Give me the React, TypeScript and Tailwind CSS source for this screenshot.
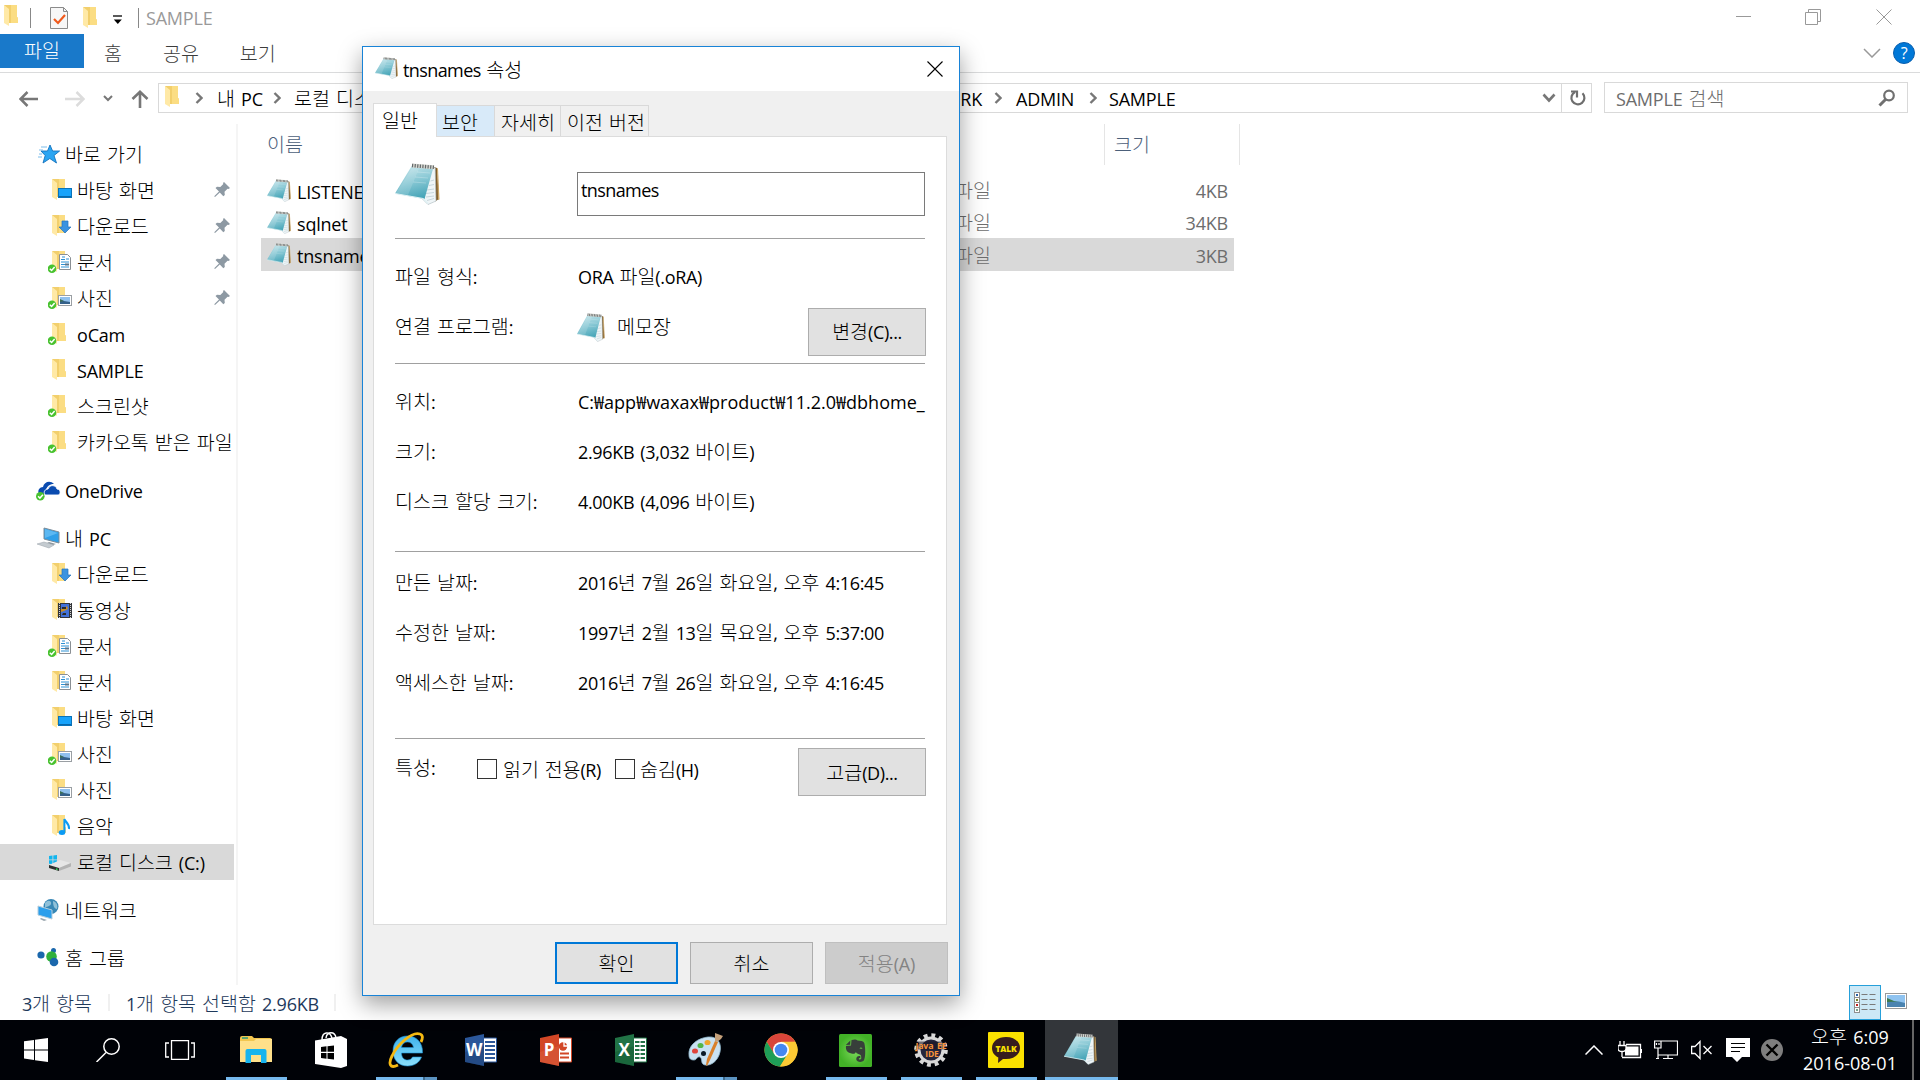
import React from "react";

/* Korean syllables are set slightly larger and lighter than the Latin text around them. */
function T({ children, className = "" }: { children: string; className?: string }) {
  const runs = children.split(/([\uac00-\ud7a3]+)/).filter(Boolean);
  return (
    <span className={"whitespace-pre " + className}>
      {runs.map((r, i) =>
        /[\uac00-\ud7a3]/.test(r) ? (
          <span key={i} className="font-['Noto_Sans_CJK_KR_Light','Noto_Sans_CJK_KR',sans-serif] text-[19.5px] leading-none font-light tracking-normal">{r}</span>
        ) : (
          <React.Fragment key={i}>{r}</React.Fragment>
        )
      )}
    </span>
  );
}

function Notepad({ w, h }: { w: number; h: number }) {
  return (
    <svg width={w} height={h} viewBox="0 0 45 42" preserveAspectRatio="none" className="shrink-0">
      <defs>
        <linearGradient id="np" x1="0.3" y1="0" x2="0.6" y2="1">
          <stop offset="0" stopColor="#c3e4ea" />
          <stop offset="0.45" stopColor="#8ccad6" />
          <stop offset="1" stopColor="#45a4b7" />
        </linearGradient>
      </defs>
      <path d="M39 4l3 1 2 31-4 2.500z" fill="#7d5c2c" />
      <path d="M42 5l1 .5 1.500 31-1.500.5z" fill="#c9a566" />
      <path d="M38 4l2.200 1L41 38l-8 3.500L25.500 34z" fill="#eff5f7" stroke="#a9b8bd" strokeWidth=".6" />
      <path d="M32 27l7-1M31 30.500l8-1M31 34l8-1M34 22.500l5-1M35.500 18l3.500-1M32 37.500l7-2" stroke="#b4c8d0" strokeWidth=".7" />
      <path d="M17 2.500l21.500 1.700L29.500 36 0 30.500z" fill="url(#np)" />
      <path d="M17 5l7 .5L13 32 1 30z" fill="#fff" opacity=".14" />
      <path d="M22 9l13 1M20 14l13 1M18 19l13 1" stroke="#fff" strokeWidth=".8" opacity=".3" />
      <path d="M0 30.500l28 5 5 5" stroke="#dff1f4" strokeWidth="1.100" fill="none" />
      <path d="M17 2.500l22 1.800" stroke="#d8d8d2" strokeWidth="4" />
      <path d="M17 2.500l22 1.800" stroke="#63686a" strokeWidth="3.500" strokeDasharray="1.200 1.400" />
    </svg>
  );
}

type Kind = "desktop" | "down" | "doc" | "pic" | "video" | "music" | "plain";

function Folder({ kind = "plain", sync = false }: { kind?: Kind; sync?: boolean }) {
  return (
    <svg width="26" height="24" viewBox="0 0 26 24" className="shrink-0">
      <path d="M4 1h13v12l1 1v5H7z" fill="#f2cf6c" />
      <path d="M11 1h6v12l1 1v5h-7z" fill="#fbdd83" />
      <path d="M4 1l5 4v17l-5-3z" fill="#ffe9a6" />
      {kind === "desktop" && (
        <g>
          <rect x="10.5" y="10.5" width="13" height="9" fill="#18a3fb" stroke="#0a73b9" />
          <path d="M11 18.5h12" stroke="#0868ac" />
        </g>
      )}
      {kind === "down" && <path d="M14 7h6v6h3l-6 6-6-6h3z" fill="#3b93e0" stroke="#2273bd" strokeWidth=".7" />}
      {kind === "doc" && (
        <g>
          <path d="M11.5 4.5h8l3 3v12h-11z" fill="#fff" stroke="#8a8f94" />
          <path d="M13 9.500h4M13 12h8M13 14.500h4M13 17h8" stroke="#2d91d3" />
          <path d="M14 7h3M18 9h3" stroke="#2d91d3" />
          <rect x="17" y="13.500" width="4" height="2" fill="#59758c" />
        </g>
      )}
      {kind === "pic" && (
        <g>
          <rect x="10.500" y="9.500" width="13" height="10" fill="#fff" stroke="#9a9fa3" />
          <rect x="12" y="11" width="10" height="7" fill="#8fc0ee" />
          <path d="M12 14l4 1 6 1v2H12z" fill="#35618a" />
          <path d="M12 13l4 2-4 1z" fill="#3b6f55" />
        </g>
      )}
      {kind === "video" && (
        <g>
          <rect x="10" y="5" width="14" height="15" fill="#34363a" />
          <rect x="13" y="6" width="8" height="13" fill="#4271d8" />
          <path d="M11.500 5v15M22.500 5v15" stroke="#d5d5d5" strokeDasharray="1 1" />
          <path d="M13 11l3-1 3-2 1 3-4 2-3 1z" fill="#c78d26" />
          <path d="M14 9h4v2h-4zM14 17h4v-2h-3z" fill="#2b2b2b" />
        </g>
      )}
      {kind === "music" && (
        <g>
          <ellipse cx="14" cy="18.500" rx="3.300" ry="2.500" fill="#0a9bf5" />
          <path d="M16.400 18V5c1 3 5.400 5 4.600 10" fill="none" stroke="#0a9bf5" strokeWidth="2" />
        </g>
      )}
      {sync && <SyncBadge x={4} y={18.7} />}
    </svg>
  );
}

function SyncBadge({ x, y }: { x: number; y: number }) {
  return (
    <g>
      <circle cx={x} cy={y} r="4.300" fill="#48c22f" />
      <path d={`M${x - 2.2} ${y}l1.800 1.800 3-3.400`} fill="none" stroke="#fff" strokeWidth="1.500" />
    </g>
  );
}

function Pin() {
  return (
    <svg width="16" height="16" viewBox="0 0 16 16">
      <path d="M10 0l6 6-1.500 1-1-.3-3 3 .3 3.300-1.500 1.300-3.500-3.700L1 15l-.8-.8L5 9.500 1.500 6 3 4.700l3.300.3 3-3L9 1z" fill="#8d99a3" />
    </svg>
  );
}

function NavRow({ icon, label, root, pin, selected }: { icon: React.ReactNode; label: string; root?: boolean; pin?: boolean; selected?: boolean }) {
  return (
    <div className={"flex h-9 w-[234px] shrink-0 items-center " + (selected ? "bg-[#d9d9d9]" : "")}>
      <div className={root ? "ml-[36px] flex w-[29px]" : "ml-[48px] flex w-[29px]"}>{icon}</div>
      <T className="pt-[2px] leading-[34px]">{label}</T>
      {pin && <div className="mr-[4px] ml-auto"><Pin /></div>}
    </div>
  );
}

const Star = (
  <svg width="24" height="22" viewBox="0 0 24 22">
    <path d="M13 2l2.600 6h7l-5.600 4.500 2.500 7.500-6.700-4.500L6 20l2.200-7.500L4 8h6.500z" fill="#2aa5f2" stroke="#1473bd" strokeWidth=".9" />
    <path d="M4 4h6M2 7h4M5 11H2M5 14H1" stroke="#7cbdea" />
  </svg>
);
const OneDrive = (
  <svg width="25" height="22" viewBox="0 0 25 22">
    <path d="M3 15C1 11 4 8 7 8c1-5 7-7 11-3 0 0-8-1-9 10z" fill="#0a4bb0" />
    <path d="M9 16c-2-3 0-6 3-6 2-5 8-4 9 0 4 0 4 6 1 6z" fill="#0a4bb0" stroke="#fff" strokeWidth=".9" />
    <SyncBadge x={4.3} y={17.3} />
  </svg>
);
const Computer = (
  <svg width="25" height="22" viewBox="0 0 25 22">
    <path d="M8 1l15 4v11L8 12z" fill="#2f9fe8" stroke="#7d8c98" />
    <path d="M9 2l13 4-13 5z" fill="#7ccaf8" opacity=".6" />
    <path d="M13 15l7 2-3 1-6-2z" fill="#8c979e" />
    <path d="M1 17l7-2 10 3-5 3z" fill="#c4cbd0" stroke="#98a1a8" strokeWidth=".5" />
  </svg>
);
const Disk = (
  <svg width="26" height="22" viewBox="0 0 26 22">
    <path d="M1 4l3.500-.5v4H1zM5.300 3.400L9 3v4.500H5.300zM1 8.200h3.500v4L1 11.800zM5.300 8.200H9v4.500l-3.700-.4z" fill="#12b5ee" />
    <path d="M1 13l11-5 11 3-12 5z" fill="#e6e6e6" />
    <path d="M11 16l12-5v3.500L11 19z" fill="#b3b3b3" />
    <path d="M1 13l10 3v3L1 16z" fill="#2d302e" />
    <path d="M8 17l1.500.5" stroke="#33e05b" strokeWidth="1.500" />
  </svg>
);
const Network = (
  <svg width="25" height="24" viewBox="0 0 25 24">
    <circle cx="15" cy="8.500" r="7.500" fill="#3787b5" />
    <path d="M9 5c3-4 7-2 6 1s-5 2-6 4zM17 3c4 1 5 5 4 8-3 0-4-4-4-8z" fill="#8fc0d8" />
    <path d="M2 8l14 4v9L2 17z" fill="#2c9fec" stroke="#b7cfdd" />
    <path d="M5 20l6 2-3 1-4-2z" fill="#9aa6ae" />
  </svg>
);
const HomeGroup = (
  <svg width="25" height="22" viewBox="0 0 25 22">
    <circle cx="5" cy="8" r="3.600" fill="#1a67ac" />
    <circle cx="17.500" cy="3.500" r="2.500" fill="#1a67ac" />
    <circle cx="15.500" cy="9.500" r="5.300" fill="#31b03c" />
    <circle cx="18" cy="15" r="4.300" fill="#1a67ac" />
  </svg>
);

function Sidebar() {
  return (
    <div className="flex h-[861px] w-[238px] shrink-0 flex-col border-r-2 border-[#f5f5f5] pt-[12px]">
      <NavRow root icon={<div className="ml-[1px]">{Star}</div>} label="바로 가기" />
      <NavRow pin icon={<Folder kind="desktop" />} label="바탕 화면" />
      <NavRow pin icon={<Folder kind="down" />} label="다운로드" />
      <NavRow pin icon={<Folder kind="doc" sync />} label="문서" />
      <NavRow pin icon={<Folder kind="pic" sync />} label="사진" />
      <NavRow icon={<Folder sync />} label="oCam" />
      <NavRow icon={<Folder />} label="SAMPLE" />
      <NavRow icon={<Folder sync />} label="스크린샷" />
      <NavRow icon={<Folder sync />} label="카카오톡 받은 파일" />
      <div className="h-3" />
      <NavRow root icon={OneDrive} label="OneDrive" />
      <div className="h-3" />
      <NavRow root icon={Computer} label="내 PC" />
      <NavRow icon={<Folder kind="down" />} label="다운로드" />
      <NavRow icon={<Folder kind="video" />} label="동영상" />
      <NavRow icon={<Folder kind="doc" sync />} label="문서" />
      <NavRow icon={<Folder kind="doc" />} label="문서" />
      <NavRow icon={<Folder kind="desktop" />} label="바탕 화면" />
      <NavRow icon={<Folder kind="pic" sync />} label="사진" />
      <NavRow icon={<Folder kind="pic" />} label="사진" />
      <NavRow icon={<Folder kind="music" />} label="음악" />
      <NavRow selected icon={<div className="mt-[2px]">{Disk}</div>} label="로컬 디스크 (C:)" />
      <div className="h-3" />
      <NavRow root icon={Network} label="네트워크" />
      <div className="h-3" />
      <NavRow root icon={HomeGroup} label="홈 그룹" />
    </div>
  );
}

function TitleBar() {
  return (
    <div className="flex h-[34px] items-center">
      <div className="flex w-[30px]"><div className="-mt-[2px]"><Folder /></div></div>
      <div className="mt-[2px] h-[20px] w-px bg-[#888]" />
      <svg width="18" height="22" viewBox="0 0 18 22" className="mt-[2px] ml-[19px]">
        <path d="M.5.500h13l4 4v17H.5z" fill="#f7f7f7" stroke="#8b8b8b" />
        <path d="M13.500.500v4h4" fill="none" stroke="#8b8b8b" />
        <path d="M4 12l4 4 7-8" fill="none" stroke="#f05a1c" strokeWidth="2.200" />
      </svg>
      <div className="mt-[2px] ml-[11px] flex w-[32px]"><Folder /></div>
      <svg width="10" height="10" viewBox="0 0 10 10" className="mt-[6px] ml-[2px]">
        <path d="M0 1h9" stroke="#000" strokeWidth="1.300" />
        <path d="M.8 4.500h8L4.800 9z" fill="#000" />
      </svg>
      <div className="mt-[2px] ml-[15px] h-[20px] w-px bg-[#888]" />
      <T className="mt-[3px] ml-[7px] text-[#999]">SAMPLE</T>
      <div className="mr-[28px] ml-auto flex items-center gap-[54px]">
        <svg width="16" height="16" viewBox="0 0 16 16"><path d="M0 7.500h15" stroke="#999" /></svg>
        <svg width="16" height="16" viewBox="0 0 16 16" fill="none" stroke="#999" className="-ml-px mr-px">
          <path d="M.5 3.500h12v12H.5zM3.500 3.500v-3h12v12h-3" />
        </svg>
        <svg width="16" height="16" viewBox="0 0 16 16"><path d="M.5.500l15 15M15.500.500l-15 15" stroke="#999" /></svg>
      </div>
    </div>
  );
}

function RibbonTabs() {
  return (
    <div className="flex h-[39px] items-start border-b border-[#dadbdc] text-[#3c3c3c]">
      <div className="flex h-[34px] w-[84px] items-center justify-center bg-[#1979ca] pt-px text-white"><T>파일</T></div>
      <T className="ml-[20px] leading-[41px]">홈</T>
      <T className="ml-[41px] leading-[41px]">공유</T>
      <T className="ml-[41px] leading-[41px]">보기</T>
      <div className="mt-[8px] mr-[5px] ml-auto flex items-center gap-[12px]">
        <svg width="18" height="10" viewBox="0 0 18 10"><path d="M1 1l8 8 8-8" fill="none" stroke="#999" strokeWidth="1.500" /></svg>
        <div className="flex size-[22px] items-center justify-center rounded-full border border-[#0a5fae] bg-[#0078d7] text-[16px] leading-none text-white">?</div>
      </div>
    </div>
  );
}

function Crumb() {
  return (
    <svg width="8" height="12" viewBox="0 0 8 12" className="shrink-0">
      <path d="M1.500 1l5 5-5 5" fill="none" stroke="#777" strokeWidth="2.400" />
    </svg>
  );
}

function AddressRow() {
  return (
    <div className="flex h-[51px] items-start pt-[9px]">
      <div className="flex h-[32px] w-[158px] shrink-0 items-center pt-px">
        <svg width="20" height="16" viewBox="0 0 20 16" className="ml-[19px]" fill="none" stroke="#777" strokeWidth="2.500">
          <path d="M19 8H2M8.500 1L1.500 8l7 7" />
        </svg>
        <svg width="20" height="16" viewBox="0 0 20 16" className="ml-[26px]" fill="none" stroke="#dcdcdc" strokeWidth="2.500">
          <path d="M0 8h18M11.500 1l7 7-7 7" />
        </svg>
        <svg width="10" height="7" viewBox="0 0 10 7" className="ml-[18px]" fill="none" stroke="#777" strokeWidth="2"><path d="M1 1l4 4 4-4" /></svg>
        <svg width="18" height="18" viewBox="0 0 18 18" className="ml-[18px]" fill="none" stroke="#777" strokeWidth="2.600">
          <path d="M9 18V2M1.500 9L9 1.800 16.500 9" />
        </svg>
      </div>
      <div className="mt-[1px] flex h-[30px] w-[1434px] shrink-0 items-center border border-[#d9d9d9]">
        <div className="flex w-[36px]"><div className="ml-[2px] -mt-[2px]"><Folder /></div></div>
        <Crumb />
        <T className="mt-[3px] ml-[14px] w-[56px] shrink-0">내 PC</T>
        <Crumb />
        <T className="mt-[3px] ml-[13px] shrink-0">로컬 디스</T>
        <T className="mt-[3px] ml-auto">NETWORK</T>
        <div className="ml-[12px]"><Crumb /></div>
        <T className="mt-[3px] ml-[14px] w-[73px]">ADMIN</T>
        <Crumb />
        <T className="mt-[3px] ml-[12px] w-[433px]">SAMPLE</T>
        <svg width="14" height="10" viewBox="0 0 14 10" fill="none" stroke="#777" strokeWidth="2.600"><path d="M1.500 1.500L7 7.500l5.500-6" /></svg>
        <div className="ml-[5px] flex h-full w-[30px] items-center justify-center border-l border-[#d9d9d9]">
          <svg width="18" height="18" viewBox="0 0 18 18" fill="none" stroke="#6e6e6e" strokeWidth="2.200" className="ml-[2px]">
            <path d="M13.500 4.200A6.500 6.500 0 1 1 6 3" /><path d="M2 2.500h6v6" />
          </svg>
        </div>
      </div>
      <div className="ml-[12px] flex h-[31px] w-[304px] items-center border border-[#d9d9d9] pr-[11px] pl-[11px] text-[#6d6d6d]">
        <T className="mt-[3px]">SAMPLE 검색</T>
        <svg width="18" height="18" viewBox="0 0 18 18" className="ml-auto" fill="none" stroke="#707070">
          <circle cx="11" cy="6.500" r="4.800" strokeWidth="2.200" /><path d="M8 10l-6.500 6.500" strokeWidth="3" />
        </svg>
      </div>
    </div>
  );
}

function FileRow({ name, size, selected }: { name: string; size: string; selected?: boolean }) {
  return (
    <div className={"flex w-[973px] items-center pr-[6px] pl-[6px] " + (selected ? "h-[33px] bg-[#d9d9d9]" : "h-[32px]")}>
      <div><Notepad w={24} h={23} /></div>
      <T className="mt-[3px] ml-[6px] w-[616px] leading-8">{name}</T>
      <T className="mt-[3px] text-[#6d6d6d]">ORA 파일</T>
      <T className="mt-[3px] ml-auto text-[#6d6d6d]">{size}</T>
    </div>
  );
}

function Files() {
  return (
    <div className="flex flex-col pl-[23px]">
      <div className="flex h-[41px] items-center text-[#4c607a]">
        <T className="mt-[2px] ml-[6px] w-[837px]">이름</T>
        <div className="flex h-full w-[136px] items-center border-x border-[#e5e5e5] pt-[2px] pl-[9px]"><T>크기</T></div>
      </div>
      <div className="mt-[9px] flex flex-col">
        <FileRow name="LISTENER" size="4KB" />
        <FileRow name="sqlnet" size="34KB" />
        <FileRow name="tnsnames" size="3KB" selected />
      </div>
    </div>
  );
}

function StatusBar() {
  return (
    <div className="flex h-[35px] items-center text-[#1e395b]">
      <T className="mt-[3px] ml-[22px] w-[86px]">3개 항목</T>
      <div className="h-[17px] w-[2px] bg-[#f0f0f0]" />
      <T className="mt-[3px] ml-[16px] w-[208px]">1개 항목 선택함 2.96KB</T>
      <div className="h-[17px] w-[2px] bg-[#f0f0f0]" />
      <div className="mr-[13px] ml-auto flex items-center gap-[4px]">
        <div className="flex h-[35px] w-[32px] items-center justify-center border border-[#26a0da] bg-[#cce8f6]">
          <svg width="22" height="22" viewBox="0 0 22 22">
            {[0, 1, 2, 3].map((i) => (
              <g key={i}>
                <rect x=".5" y={0.5 + i * 5} width="5" height="5" fill="#fff" stroke="#8f8f8f" />
                <path d={`M7.500 ${2.5 + i * 5}h6M15.500 ${2.5 + i * 5}h6`} stroke="#7a7a7a" />
              </g>
            ))}
            <path d="M2 2h2v2H2z" fill="#2a62a5" /><path d="M2 7h2v2H2z" fill="#768022" />
            <path d="M2 12h2v2H2z" fill="#c02020" /><path d="M2 17h2v2H2z" fill="#75a58c" />
          </svg>
        </div>
        <svg width="22" height="16" viewBox="0 0 22 16" className="-mt-[3px]">
          <rect x=".5" y=".5" width="21" height="15" fill="#fff" stroke="#999" />
          <rect x="2" y="2" width="18" height="12" fill="#8fc3f0" />
          <path d="M2 5l7 3 5 1H2z" fill="#3d7a4d" /><path d="M2 9l12-.5 6 1.500v4H2z" fill="#4a83b0" />
        </svg>
      </div>
    </div>
  );
}

function Field({ label, value, wide }: { label: string; value: string; wide?: boolean }) {
  return (
    <div className="flex h-[50px] items-center">
      <T className="w-[183px] shrink-0">{label}</T>
      <T className={wide ? "tracking-[0.01px]" : "tracking-[-0.33px]"}>{value}</T>
    </div>
  );
}

const Rule = () => <div className="h-px shrink-0 bg-[#a0a0a0]" />;

const btn = "flex items-center justify-center border ";

function Properties() {
  return (
    <div className="absolute top-[46px] left-[362px] flex h-[950px] w-[598px] flex-col border border-[#1883d7] bg-[#f0f0f0] shadow-[0_8px_22px_rgba(0,0,0,0.38)]">
      <div className="flex h-[44px] shrink-0 items-center bg-white pl-[12px]">
        <div className="-mt-[3px]"><Notepad w={23} h={22} /></div>
        <T className="mt-[3px] ml-[5px] tracking-[-0.6px]">tnsnames 속성</T>
        <svg width="16" height="16" viewBox="0 0 16 16" className="mr-[16px] -mt-[1px] ml-auto"><path d="M.5.500l15 15M15.500.500l-15 15" stroke="#000" strokeWidth="1.100" /></svg>
      </div>
      <div className="relative z-10 mt-[12px] ml-[10px] flex items-end">
        <div className="-mb-px h-[34px] w-[64px] border border-b-0 border-[#dcdcdc] bg-white pl-[8px] leading-[34px]"><T>일반</T></div>
        <div className="h-[31px] w-[58px] border-t border-r border-[#d9d9d9] bg-[#d8eaf9] pl-[5px] leading-[34px]"><T>보안</T></div>
        <div className="h-[31px] w-[66px] border-t border-r border-[#d9d9d9] pl-[6px] leading-[34px]"><T>자세히</T></div>
        <div className="h-[31px] w-[88px] border-t border-r border-[#d9d9d9] pl-[6px] leading-[34px]"><T>이전 버전</T></div>
      </div>
      <div className="ml-[10px] flex h-[789px] w-[574px] shrink-0 flex-col border border-[#dcdcdc] bg-white pr-[21px] pl-[21px]">
        <div className="flex h-[101px] shrink-0 items-start">
          <div className="mt-[26px] w-[182px]"><Notepad w={45} h={42} /></div>
          <div className="mt-[35px] h-[44px] flex-1 border border-[#7a7a7a] pl-[3px] leading-[35px]"><T className="tracking-[-0.6px]">tnsnames</T></div>
        </div>
        <Rule />
        <div className="flex h-[124px] shrink-0 flex-col pt-[13px]">
          <Field label="파일 형식:" value="ORA 파일(.oRA)" />
          <div className="flex h-[50px] items-center">
            <T className="w-[182px] shrink-0">연결 프로그램:</T>
            <Notepad w={28} h={29} />
            <T className="ml-[12px]">메모장</T>
            <div className={btn + "mt-[9px] -mr-px ml-auto h-[48px] w-[118px] border-[#adadad] bg-[#e1e1e1] pt-[2px] tracking-[-0.4px]"}><T>변경(C)...</T></div>
          </div>
        </div>
        <Rule />
        <div className="flex h-[187px] shrink-0 flex-col pt-[13px]">
          <Field wide label="위치:" value="C:₩app₩waxax₩product₩11.2.0₩dbhome_" />
          <Field label="크기:" value="2.96KB (3,032 바이트)" />
          <Field label="디스크 할당 크기:" value="4.00KB (4,096 바이트)" />
        </div>
        <Rule />
        <div className="flex h-[186px] shrink-0 flex-col pt-[6px]">
          <Field label="만든 날짜:" value="2016년 7월 26일 화요일, 오후 4:16:45" />
          <Field label="수정한 날짜:" value="1997년 2월 13일 목요일, 오후 5:37:00" />
          <Field label="액세스한 날짜:" value="2016년 7월 26일 화요일, 오후 4:16:45" />
        </div>
        <Rule />
        <div className="flex shrink-0 items-start pt-[9px]">
          <T className="w-[82px] leading-[40px]">특성:</T>
          <div className="mt-[11px] size-[20px] border border-[#333] bg-white" />
          <T className="ml-[6px] w-[112px] leading-[45px] tracking-[-0.5px]">읽기 전용(R)</T>
          <div className="mt-[11px] size-[20px] border border-[#333] bg-white" />
          <T className="ml-[5px] leading-[45px] tracking-[-0.5px]">숨김(H)</T>
          <div className={btn + "-mr-px ml-auto h-[48px] w-[128px] border-[#adadad] bg-[#e1e1e1] pt-[2px] tracking-[-0.4px]"}><T>고급(D)...</T></div>
        </div>
      </div>
      <div className="mt-[17px] mr-[11px] flex justify-end gap-[12px]">
        <div className={btn + "h-[42px] w-[123px] border-2 border-[#0078d7] bg-[#e1e1e1] pt-[2px]"}><T>확인</T></div>
        <div className={btn + "h-[42px] w-[123px] border-[#adadad] bg-[#e1e1e1] pt-[2px]"}><T>취소</T></div>
        <div className={btn + "h-[42px] w-[123px] border-[#bfbfbf] bg-[#cccccc] pt-[2px] text-[#838383]"}><T>적용(A)</T></div>
      </div>
    </div>
  );
}

function Office({ color, dark, letter, children }: { color: string; dark: string; letter: string; children: React.ReactNode }) {
  return (
    <svg width="32" height="32" viewBox="0 0 32 32">
      <path d="M18 4h13.500v24H18z" fill="#fff" stroke={color} />
      {children}
      <path d="M0 4l19-4v32L0 28z" fill={color} />
      <path d="M0 18l19-6v20L0 28z" fill={dark} opacity=".35" />
      <text x="9" y="22" textAnchor="middle" fontSize="17" fontWeight="700" fill="#fff" fontFamily="Open Sans, sans-serif">{letter}</text>
    </svg>
  );
}

const StartIcon = (
  <svg width="24" height="24" viewBox="0 0 24 24" fill="#fff"><path d="M0 3.300L10 2v9.400H0zM11 1.800L24 0v11.400H11zM0 12.500h10v9.400l-10-1.300zM11 12.500h13V24l-13-1.800z" /></svg>
);
const SearchIcon = (
  <svg width="24" height="24" viewBox="0 0 24 24" fill="none" stroke="#fff" strokeWidth="1.500"><circle cx="15.500" cy="8.500" r="7.700" /><path d="M10 14.500L.5 24" /></svg>
);
const TaskView = (
  <svg width="30" height="20" viewBox="0 0 30 20" fill="none" stroke="#fff" strokeWidth="1.300"><path d="M6.500.700h17v18.600h-17zM4 3H.7v14H4M26 3h3.300v14H26" /></svg>
);
const Explorer = (
  <svg width="32" height="28" viewBox="0 0 32 28">
    <path d="M0 2q0-2 2-2h10l2 2h16q2 0 2 2v22H0z" fill="#f3c64f" />
    <path d="M0 5h14l2-2h16v23H0z" fill="#ffe08a" />
    <path d="M2 2h6" stroke="#2a9a7b" strokeWidth="1.500" />
    <path d="M5.500 27V15q0-2 2-2h17q2 0 2 2v12H21v-8H11v8z" fill="#18b4ee" />
  </svg>
);
const Store = (
  <svg width="32" height="36" viewBox="0 0 32 36">
    <path d="M7 8C7-1 15-1 17 6M11 6c1-7 9-7 10 0" fill="none" stroke="#fff" strokeWidth="1.500" />
    <path d="M0 8.500L26 4l6 3v27l-6 2-26-4z" fill="#fff" />
    <path d="M6 15l5.500-.7v5.500H6zM12.500 14.200L19 13.500v6.300h-6.500zM6 21h5.500v5.700L6 26zM12.500 21H19v6.500l-6.500-.8z" fill="#000" />
  </svg>
);
const IE = (
  <svg width="36" height="36" viewBox="0 0 36 36">
    <defs>
      <linearGradient id="ie" x1="0" y1="0" x2="0" y2="1"><stop offset="0" stopColor="#3fb3ec" /><stop offset="1" stopColor="#8be0fb" /></linearGradient>
    </defs>
    <path d="M34.500 21C35 10 28 4 19.500 4 11 4 5 10 5 19s6 15 14.500 15c7 0 12-3.500 14-9h-9c-1 2-2.500 3-5 3-3.500 0-6-2.500-6-7zM13.500 15.500c.5-3.500 3-5.500 6-5.500s5.500 2 6 5.500z" fill="url(#ie)" stroke="#1d94d8" strokeWidth=".6" />
    <path d="M10 33C2 37 0 32 4 24 9 13 24-1 32 2c3 1 3 4 1 8" fill="none" stroke="#f5b912" strokeWidth="2.800" />
  </svg>
);
const Paint = (
  <svg width="36" height="36" viewBox="0 0 36 36">
    <path d="M1 23C0 13 10 6 20 5c10-1 14 7 12 15-2 9-9 14-15 13-5-1-2-6-5-8-3-1-3 3-6 3s-5-1-5-5z" fill="#c9e1f1" stroke="#8fb6cc" strokeWidth=".8" />
    <ellipse cx="12.500" cy="13.500" rx="3" ry="2.600" fill="#53b648" /><ellipse cx="7" cy="19" rx="3" ry="2.600" fill="#e0453c" />
    <ellipse cx="19.500" cy="10.500" rx="3" ry="2.600" fill="#efa52b" /><circle cx="15.500" cy="21.500" r="2.500" fill="#0b1a26" />
    <path d="M27 9l3 1-8 18-3 6-1-1 1-6z" fill="#d9802b" />
    <path d="M27 1l8 3-2 3-4 3-2-1z" fill="#c4a07a" />
  </svg>
);
const Chrome = (
  <svg width="34" height="34" viewBox="0 0 34 34">
    <circle cx="17" cy="17" r="16.500" fill="#fcc934" />
    <path d="M2.700 8.700A16.500 16.500 0 0 1 31.300 8.700L17 9.500l-7 11.500z" fill="#d9453a" />
    <path d="M2.700 8.700A16.500 16.500 0 0 0 16 33.500l8-13H10z" fill="#1e9e57" />
    <path d="M31.300 8.700H17l7 12-8 12.800A16.500 16.500 0 0 0 31.300 8.700z" fill="#fcc934" />
    <circle cx="17" cy="17" r="8" fill="#fff" /><circle cx="17" cy="17" r="6.300" fill="#4688f1" />
  </svg>
);
const Evernote = (
  <svg width="33" height="33" viewBox="0 0 33 33">
    <defs>
      <radialGradient id="ev"><stop offset="0" stopColor="#7ddb5c" /><stop offset="1" stopColor="#42b227" /></radialGradient>
    </defs>
    <rect width="33" height="33" rx="1.500" fill="url(#ev)" />
    <path d="M7 12l5-.5.5-5.500c3-1 5-.5 6 .5 3 .3 6 .5 6.800 2.500 1.500 6 1.200 15-.5 17.500-1.500 2-7 2-7.500-1-.3-3 2-4 4-3.500v2c-1 0-1.500.3-1.500 1 .5 1 2.500.5 2.500-1 0-3-1-3.500-3-4-1.500-.5-2-1-2.300-2-1 2-2.500 2-4.500 1.500C8 18.500 6.500 16 7 12z" fill="#373f3a" />
    <path d="M6.800 11l4.500-4.500v4.200z" fill="#373f3a" />
    <path d="M20.500 14.500q1.500-2 3 .3z" fill="#6fd04f" />
  </svg>
);
const JavaEE = (
  <svg width="34" height="34" viewBox="0 0 34 34">
    <circle cx="17" cy="17" r="14.800" fill="none" stroke="#d8d8d8" strokeWidth="4" strokeDasharray="3.870 3.870" />
    <circle cx="17" cy="17" r="12" fill="#25253c" stroke="#d8d8d8" strokeWidth="3" />
    <path d="M2 8.500h30v8H2z" fill="#1a1420" opacity=".55" />
    <g fill="#f7923a" fontFamily="Open Sans, sans-serif" fontWeight="700" textAnchor="middle">
      <text x="17" y="15.500" fontSize="8.500" textLength="31" lengthAdjust="spacingAndGlyphs">Java EE</text>
      <text x="18" y="23.500" fontSize="8.500">IDE</text>
    </g>
  </svg>
);
const Kakao = (
  <svg width="36" height="36" viewBox="0 0 36 36">
    <rect width="36" height="36" rx="1" fill="#fae100" />
    <path d="M18 5c8 0 14 4.500 14 11S26 27 18 27l-3 0-5 4 .3-5.500C6.500 23.500 4 20.500 4 16 4 9.500 10 5 18 5z" fill="#371d1e" />
    <text x="18" y="20" fontSize="9.500" fontWeight="800" fill="#fae100" textAnchor="middle" fontFamily="Open Sans, sans-serif" textLength="21" lengthAdjust="spacingAndGlyphs">TALK</text>
  </svg>
);

function Task({ icon, open, multi }: { icon: React.ReactNode; open?: boolean; multi?: boolean }) {
  return (
    <div className="flex h-[60px] w-[75px] flex-col items-center">
      <div className="flex h-[57px] items-center justify-center pt-[3px] pr-[2px]">{icon}</div>
      {open && (
        <div className="flex h-[3px] w-[61px] bg-[#76b9ed]">
          {multi && <div className="ml-auto h-full w-[14px] border-l-2 border-[#3f6b8c] bg-[#5b93c1]" />}
        </div>
      )}
    </div>
  );
}

function Taskbar() {
  return (
    <div className="flex h-[60px] bg-[#000207] text-white">
      <div className="flex w-[72px] items-center justify-center">{StartIcon}</div>
      <div className="flex w-[72px] items-center justify-center">{SearchIcon}</div>
      <div className="mr-[3px] flex w-[72px] items-center justify-center">{TaskView}</div>
      <Task icon={Explorer} open />
      <Task icon={Store} />
      <Task icon={IE} open multi />
      <Task icon={<Office color="#2b579a" dark="#17375e" letter="W"><path d="M20 8h10M20 12h10M20 16h10M20 20h10M20 24h10" stroke="#2b579a" strokeWidth="1.800" /></Office>} />
      <Task icon={<Office color="#d24726" dark="#dd6a4b" letter="P"><path d="M20 19.500h9M20 23.500h9" stroke="#d24726" strokeWidth="1.800" /><circle cx="23" cy="12.500" r="4.200" fill="#d24726" /><path d="M24 7v5h5" stroke="#fff" fill="none" strokeWidth="1.300" /></Office>} />
      <Task icon={<Office color="#217346" dark="#0f4f2c" letter="X"><path d="M20 8h10M20 12h10M20 16h10M20 20h10M20 24h10" stroke="#217346" strokeWidth="2" strokeDasharray="4.500 1" /></Office>} />
      <Task icon={Paint} open multi />
      <Task icon={Chrome} />
      <Task icon={Evernote} open />
      <Task icon={JavaEE} open />
      <Task icon={Kakao} open />
      <div className="ml-px flex w-[73px] flex-col items-center bg-[#33363a]">
        <div className="flex h-[57px] items-center pt-px pr-[2px]"><Notepad w={33} h={32} /></div>
        <div className="h-[3px] w-full bg-[#76b9ed]" />
      </div>
      <div className="ml-auto flex items-center">
        <svg width="18" height="10" viewBox="0 0 18 10" fill="none" stroke="#fff" strokeWidth="1.500"><path d="M.5 9.500L9 1l8.500 8.500" /></svg>
        <svg width="24" height="18" viewBox="0 0 24 18" className="ml-[15px]" fill="none" stroke="#fff" strokeWidth="1.300">
          <path d="M2 0v4M6 0v4M4 10.500V16M8 3.500h14.500v13H4" />
          <rect x="7" y="5.500" width="13.500" height="9" fill="#fff" stroke="none" /><path d="M23.500 8v4" />
          <path d="M0 4.500h8v3q0 3-4 3t-4-3z" fill="#000207" />
        </svg>
        <svg width="24" height="20" viewBox="0 0 24 20" className="ml-[12px]" fill="none" stroke="#fff" strokeWidth="1.200">
          <path d="M7 1h16.500v14H4M14 15v3.500M9 18.500h10M.6 1H7v7H.600zM4 8v10M2.500 3v2M5 3v2M2 18.500h3" />
        </svg>
        <svg width="21" height="20" viewBox="0 0 21 20" className="ml-[13px]" fill="none" stroke="#fff" strokeWidth="1.300">
          <path d="M.6 6.500H4L9 1.500v17l-5-5H.600zM12.500 6l8 8M20.500 6l-8 8" />
        </svg>
        <svg width="24" height="24" viewBox="0 0 24 24" className="ml-[14px]"><path d="M0 0h24v19h-8l-5 5-5-5H0z" fill="#fff" /><path d="M5 5.500h14M5 9.500h14M5 13.500h9" stroke="#000" /></svg>
        <svg width="22" height="22" viewBox="0 0 22 22" className="ml-[11px]"><circle cx="11" cy="11" r="11" fill="#7e7e7e" /><path d="M5.500 5.500l11 11M16.500 5.500l-11 11" stroke="#000" strokeWidth="2.400" /></svg>
        <div className="ml-[20px] flex w-[94px] flex-col items-center leading-[26px] tracking-normal"><T>오후 6:09</T><T>2016-08-01</T></div>
        <div className="mr-[6px] ml-[15px] h-[60px] w-[2px] bg-[#666]" />
      </div>
    </div>
  );
}

export default function App() {
  return (
    <div className="relative flex h-[1080px] w-[1920px] flex-col overflow-hidden bg-white font-['Open_Sans','Noto_Sans_CJK_KR',sans-serif] text-[18px] tracking-[-0.2px] text-black [word-spacing:1.6px]">
      <TitleBar />
      <RibbonTabs />
      <AddressRow />
      <div className="flex h-[861px] shrink-0">
        <Sidebar />
        <Files />
      </div>
      <StatusBar />
      <Taskbar />
      <Properties />
    </div>
  );
}
